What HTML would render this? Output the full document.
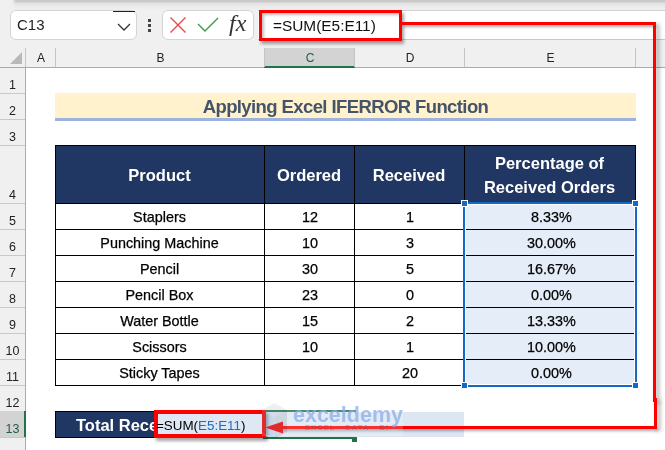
<!DOCTYPE html>
<html><head><meta charset="utf-8"><style>
html,body{margin:0;padding:0;}
body{width:665px;height:450px;overflow:hidden;position:relative;background:#ffffff;font-family:"Liberation Sans",sans-serif;}
div{position:absolute;box-sizing:border-box;}
.t{white-space:nowrap;text-align:center;}
</style></head><body>

<div style="left:0px;top:0px;width:665px;height:48px;background:#f0f0f0"></div>
<div style="left:12px;top:0px;width:653px;height:10px;background:linear-gradient(#c8c8c8 0px,#cacaca 1.5px,#e2e2e2 3.5px,#eaeaea 6px,#f0f0f0 10px);-webkit-mask-image:linear-gradient(90deg,transparent 0px,#000 4px)"></div>
<div style="left:10px;top:10px;width:127px;height:30px;background:#fff;border:1px solid #d4d4d4;border-radius:6px"></div>
<div style="left:113px;top:11px;width:22px;height:1px;background:#222"></div>
<div class="t" style="left:17px;top:11px;width:40px;height:28px;line-height:28px;text-align:left;font-size:15px;color:#222">C13</div>
<svg style="position:absolute;left:116px;top:22px" width="16" height="10"><polyline points="2,2 8,8 14,2" fill="none" stroke="#333" stroke-width="1.3"/></svg>
<div style="left:148px;top:19px;width:3px;height:3px;background:#444"></div>
<div style="left:148px;top:24px;width:3px;height:3px;background:#444"></div>
<div style="left:148px;top:29px;width:3px;height:3px;background:#444"></div>
<div style="left:162px;top:10px;width:92px;height:30px;background:#fff;border:1px solid #d4d4d4;border-radius:6px"></div>
<svg style="position:absolute;left:168px;top:15px" width="20" height="20"><path d="M2.5,2.5 L17.5,17.5 M17.5,2.5 L2.5,17.5" stroke="#e8474a" stroke-width="1.4" fill="none"/></svg>
<svg style="position:absolute;left:196px;top:15px" width="24" height="20"><polyline points="2,9 9,16 22,3" stroke="#3a9a48" stroke-width="1.4" fill="none"/></svg>
<div class="t" style="left:229px;top:10px;width:26px;height:26px;line-height:26px;font-family:'Liberation Serif',serif;font-style:italic;font-size:24px;color:#333;text-align:left;letter-spacing:0px">fx</div>
<div style="left:258px;top:10px;width:407px;height:30px;background:#fff;border-top:1px solid #d0d0d0;border-bottom:1px solid #c8c8c8"></div>
<div style="left:0px;top:48px;width:665px;height:20px;background:#f0f0f0;border-bottom:1px solid #ababab"></div>
<div style="left:264px;top:48px;width:91px;height:20px;background:#d3d3d3;border-bottom:2px solid #217346"></div>
<div style="left:25px;top:48px;width:1px;height:19px;background:#c4c4c4"></div>
<div style="left:55px;top:48px;width:1px;height:19px;background:#c4c4c4"></div>
<div style="left:264px;top:48px;width:1px;height:19px;background:#c4c4c4"></div>
<div style="left:354px;top:48px;width:1px;height:19px;background:#c4c4c4"></div>
<div style="left:464px;top:48px;width:1px;height:19px;background:#c4c4c4"></div>
<div style="left:635px;top:48px;width:1px;height:19px;background:#c4c4c4"></div>
<svg style="position:absolute;left:8px;top:50px" width="16" height="16"><polygon points="14,2 14,14 2,14" fill="#b9b9b9"/></svg>
<div class="t" style="left:26px;top:49px;width:30px;height:19px;line-height:19px;font-size:12px;color:#222">A</div>
<div class="t" style="left:56px;top:49px;width:209px;height:19px;line-height:19px;font-size:12px;color:#222">B</div>
<div class="t" style="left:265px;top:49px;width:90px;height:19px;line-height:19px;font-size:12px;color:#1f5f3f">C</div>
<div class="t" style="left:355px;top:49px;width:110px;height:19px;line-height:19px;font-size:12px;color:#222">D</div>
<div class="t" style="left:465px;top:49px;width:171px;height:19px;line-height:19px;font-size:12px;color:#222">E</div>
<div style="left:0px;top:68px;width:26px;height:382px;background:#f0f0f0;border-right:1px solid #ababab"></div>
<div style="left:0px;top:93px;width:25px;height:1px;background:#c8c8c8"></div>
<div class="t" style="left:0px;top:76px;width:25px;height:18px;line-height:18px;font-size:12.5px;color:#222">1</div>
<div style="left:0px;top:119px;width:25px;height:1px;background:#c8c8c8"></div>
<div class="t" style="left:0px;top:102px;width:25px;height:18px;line-height:18px;font-size:12.5px;color:#222">2</div>
<div style="left:0px;top:145px;width:25px;height:1px;background:#c8c8c8"></div>
<div class="t" style="left:0px;top:128px;width:25px;height:18px;line-height:18px;font-size:12.5px;color:#222">3</div>
<div style="left:0px;top:203px;width:25px;height:1px;background:#c8c8c8"></div>
<div class="t" style="left:0px;top:186px;width:25px;height:18px;line-height:18px;font-size:12.5px;color:#222">4</div>
<div style="left:0px;top:229px;width:25px;height:1px;background:#c8c8c8"></div>
<div class="t" style="left:0px;top:212px;width:25px;height:18px;line-height:18px;font-size:12.5px;color:#222">5</div>
<div style="left:0px;top:255px;width:25px;height:1px;background:#c8c8c8"></div>
<div class="t" style="left:0px;top:238px;width:25px;height:18px;line-height:18px;font-size:12.5px;color:#222">6</div>
<div style="left:0px;top:281px;width:25px;height:1px;background:#c8c8c8"></div>
<div class="t" style="left:0px;top:264px;width:25px;height:18px;line-height:18px;font-size:12.5px;color:#222">7</div>
<div style="left:0px;top:307px;width:25px;height:1px;background:#c8c8c8"></div>
<div class="t" style="left:0px;top:290px;width:25px;height:18px;line-height:18px;font-size:12.5px;color:#222">8</div>
<div style="left:0px;top:333px;width:25px;height:1px;background:#c8c8c8"></div>
<div class="t" style="left:0px;top:316px;width:25px;height:18px;line-height:18px;font-size:12.5px;color:#222">9</div>
<div style="left:0px;top:359px;width:25px;height:1px;background:#c8c8c8"></div>
<div class="t" style="left:0px;top:342px;width:25px;height:18px;line-height:18px;font-size:12.5px;color:#222">10</div>
<div style="left:0px;top:385px;width:25px;height:1px;background:#c8c8c8"></div>
<div class="t" style="left:0px;top:368px;width:25px;height:18px;line-height:18px;font-size:12.5px;color:#222">11</div>
<div style="left:0px;top:411px;width:25px;height:1px;background:#c8c8c8"></div>
<div class="t" style="left:0px;top:394px;width:25px;height:18px;line-height:18px;font-size:12.5px;color:#222">12</div>
<div style="left:0px;top:411px;width:26px;height:26px;background:#d3d3d3"></div>
<div style="left:24px;top:411px;width:2px;height:26px;background:#217346"></div>
<div style="left:0px;top:437px;width:25px;height:1px;background:#c8c8c8"></div>
<div class="t" style="left:0px;top:420px;width:25px;height:18px;line-height:18px;font-size:12.5px;color:#1f5f3f">13</div>
<div style="left:0px;top:463px;width:25px;height:1px;background:#c8c8c8"></div>
<div style="left:55px;top:93px;width:581px;height:25px;background:#fff2cc"></div>
<div style="left:55px;top:118px;width:581px;height:3px;background:#9db3de"></div>
<div class="t" style="left:55px;top:94px;width:581px;height:26px;line-height:26px;font-size:18.5px;letter-spacing:-0.6px;font-weight:bold;color:#44546a">Applying Excel IFERROR Function</div>
<div style="left:55px;top:145px;width:581px;height:59px;background:#203764;border:1px solid #000"></div>
<div style="left:264px;top:145px;width:1px;height:241px;background:#000"></div>
<div style="left:354px;top:145px;width:1px;height:241px;background:#000"></div>
<div style="left:464px;top:145px;width:1px;height:241px;background:#000"></div>
<div class="t" style="left:55px;top:146px;width:209px;height:58px;line-height:58px;font-size:16.5px;font-weight:bold;color:#fff">Product</div>
<div class="t" style="left:264px;top:146px;width:90px;height:58px;line-height:58px;font-size:16.5px;font-weight:bold;color:#fff">Ordered</div>
<div class="t" style="left:354px;top:146px;width:110px;height:58px;line-height:58px;font-size:16.5px;font-weight:bold;color:#fff">Received</div>
<div class="t" style="left:464px;top:151px;width:171px;height:24px;line-height:24px;font-size:16.5px;font-weight:bold;color:#fff">Percentage of</div>
<div class="t" style="left:464px;top:175px;width:171px;height:24px;line-height:24px;font-size:16.5px;font-weight:bold;color:#fff">Received Orders</div>
<div style="left:465px;top:204px;width:170px;height:181px;background:#e5eef8"></div>
<div style="left:55px;top:203px;width:1px;height:183px;background:#000"></div>
<div style="left:635px;top:145px;width:1px;height:241px;background:#000"></div>
<div style="left:55px;top:229px;width:581px;height:1px;background:#000"></div>
<div class="t" style="left:55px;top:205px;width:209px;height:25px;line-height:25px;font-size:14.4px;color:#000;-webkit-text-stroke:0.25px #000">Staplers</div>
<div class="t" style="left:265px;top:205px;width:90px;height:25px;line-height:25px;font-size:14.4px;color:#000;-webkit-text-stroke:0.25px #000">12</div>
<div class="t" style="left:355px;top:205px;width:110px;height:25px;line-height:25px;font-size:14.4px;color:#000;-webkit-text-stroke:0.25px #000">1</div>
<div class="t" style="left:466px;top:205px;width:171px;height:25px;line-height:25px;font-size:14.4px;color:#000;-webkit-text-stroke:0.25px #000">8.33%</div>
<div style="left:55px;top:255px;width:581px;height:1px;background:#000"></div>
<div class="t" style="left:55px;top:231px;width:209px;height:25px;line-height:25px;font-size:14.4px;color:#000;-webkit-text-stroke:0.25px #000">Punching Machine</div>
<div class="t" style="left:265px;top:231px;width:90px;height:25px;line-height:25px;font-size:14.4px;color:#000;-webkit-text-stroke:0.25px #000">10</div>
<div class="t" style="left:355px;top:231px;width:110px;height:25px;line-height:25px;font-size:14.4px;color:#000;-webkit-text-stroke:0.25px #000">3</div>
<div class="t" style="left:466px;top:231px;width:171px;height:25px;line-height:25px;font-size:14.4px;color:#000;-webkit-text-stroke:0.25px #000">30.00%</div>
<div style="left:55px;top:281px;width:581px;height:1px;background:#000"></div>
<div class="t" style="left:55px;top:257px;width:209px;height:25px;line-height:25px;font-size:14.4px;color:#000;-webkit-text-stroke:0.25px #000">Pencil</div>
<div class="t" style="left:265px;top:257px;width:90px;height:25px;line-height:25px;font-size:14.4px;color:#000;-webkit-text-stroke:0.25px #000">30</div>
<div class="t" style="left:355px;top:257px;width:110px;height:25px;line-height:25px;font-size:14.4px;color:#000;-webkit-text-stroke:0.25px #000">5</div>
<div class="t" style="left:466px;top:257px;width:171px;height:25px;line-height:25px;font-size:14.4px;color:#000;-webkit-text-stroke:0.25px #000">16.67%</div>
<div style="left:55px;top:307px;width:581px;height:1px;background:#000"></div>
<div class="t" style="left:55px;top:283px;width:209px;height:25px;line-height:25px;font-size:14.4px;color:#000;-webkit-text-stroke:0.25px #000">Pencil Box</div>
<div class="t" style="left:265px;top:283px;width:90px;height:25px;line-height:25px;font-size:14.4px;color:#000;-webkit-text-stroke:0.25px #000">23</div>
<div class="t" style="left:355px;top:283px;width:110px;height:25px;line-height:25px;font-size:14.4px;color:#000;-webkit-text-stroke:0.25px #000">0</div>
<div class="t" style="left:466px;top:283px;width:171px;height:25px;line-height:25px;font-size:14.4px;color:#000;-webkit-text-stroke:0.25px #000">0.00%</div>
<div style="left:55px;top:333px;width:581px;height:1px;background:#000"></div>
<div class="t" style="left:55px;top:309px;width:209px;height:25px;line-height:25px;font-size:14.4px;color:#000;-webkit-text-stroke:0.25px #000">Water Bottle</div>
<div class="t" style="left:265px;top:309px;width:90px;height:25px;line-height:25px;font-size:14.4px;color:#000;-webkit-text-stroke:0.25px #000">15</div>
<div class="t" style="left:355px;top:309px;width:110px;height:25px;line-height:25px;font-size:14.4px;color:#000;-webkit-text-stroke:0.25px #000">2</div>
<div class="t" style="left:466px;top:309px;width:171px;height:25px;line-height:25px;font-size:14.4px;color:#000;-webkit-text-stroke:0.25px #000">13.33%</div>
<div style="left:55px;top:359px;width:581px;height:1px;background:#000"></div>
<div class="t" style="left:55px;top:335px;width:209px;height:25px;line-height:25px;font-size:14.4px;color:#000;-webkit-text-stroke:0.25px #000">Scissors</div>
<div class="t" style="left:265px;top:335px;width:90px;height:25px;line-height:25px;font-size:14.4px;color:#000;-webkit-text-stroke:0.25px #000">10</div>
<div class="t" style="left:355px;top:335px;width:110px;height:25px;line-height:25px;font-size:14.4px;color:#000;-webkit-text-stroke:0.25px #000">1</div>
<div class="t" style="left:466px;top:335px;width:171px;height:25px;line-height:25px;font-size:14.4px;color:#000;-webkit-text-stroke:0.25px #000">10.00%</div>
<div style="left:55px;top:385px;width:581px;height:1px;background:#000"></div>
<div class="t" style="left:55px;top:361px;width:209px;height:25px;line-height:25px;font-size:14.4px;color:#000;-webkit-text-stroke:0.25px #000">Sticky Tapes</div>
<div class="t" style="left:265px;top:361px;width:90px;height:25px;line-height:25px;font-size:14.4px;color:#000;-webkit-text-stroke:0.25px #000"></div>
<div class="t" style="left:355px;top:361px;width:110px;height:25px;line-height:25px;font-size:14.4px;color:#000;-webkit-text-stroke:0.25px #000">20</div>
<div class="t" style="left:466px;top:361px;width:171px;height:25px;line-height:25px;font-size:14.4px;color:#000;-webkit-text-stroke:0.25px #000">0.00%</div>
<div style="left:465px;top:204px;width:170px;height:181px;border:1px solid #ffffff"></div>
<div style="left:463px;top:202px;width:174px;height:185px;border:2px solid #1469c4"></div>
<div style="left:461px;top:200px;width:7px;height:7px;background:#1469c4;border:1px solid #fff"></div>
<div style="left:632px;top:200px;width:7px;height:7px;background:#1469c4;border:1px solid #fff"></div>
<div style="left:461px;top:382px;width:7px;height:7px;background:#1469c4;border:1px solid #fff"></div>
<div style="left:632px;top:382px;width:7px;height:7px;background:#1469c4;border:1px solid #fff"></div>
<div style="left:55px;top:411px;width:112px;height:27px;background:#203764;border:1px solid #000"></div>
<div class="t" style="left:76px;top:412px;width:90px;height:26px;line-height:26px;text-align:left;font-size:16.5px;font-weight:bold;color:#fff">Total Received</div>
<div style="left:266px;top:412px;width:198px;height:25px;background:#dde7f3"></div>
<div style="left:263px;top:410px;width:93px;height:2px;background:#217346"></div>
<div style="left:263px;top:437px;width:89px;height:2px;background:#217346"></div>
<div style="left:352px;top:437px;width:5px;height:5px;background:#217346"></div>
<div style="left:154px;top:410px;width:112px;height:28px;background:#dde8f4;border:4px solid #ff0000;box-shadow:2px 3px 3px rgba(0,0,0,0.35)"></div>
<div class="t" style="left:156px;top:416px;width:110px;height:20px;line-height:20px;text-align:left;font-size:13.4px;color:#000">=SUM(<span style="color:#1f6bc2">E5:E11</span>)</div>
<div style="left:259px;top:10px;width:143px;height:31px;border:3px solid #ff0000;box-shadow:2px 3px 3px rgba(0,0,0,0.35), inset 2px 2px 3px rgba(0,0,0,0.25)"></div>
<div class="t" style="left:273px;top:13px;width:120px;height:26px;line-height:26px;text-align:left;font-size:15.4px;color:#111">=SUM(E5:E11)</div>
<div style="left:402px;top:22px;width:253px;height:3px;background:#ff0000;box-shadow:1px 2px 3px rgba(0,0,0,0.35)"></div>
<div style="left:653px;top:22px;width:3px;height:380px;background:#ff0000;box-shadow:3px 2px 4px rgba(0,0,0,0.35)"></div>
<div style="left:654px;top:398px;width:3px;height:31px;background:#ff0000;box-shadow:3px 2px 4px rgba(0,0,0,0.35)"></div>
<div style="left:280px;top:426px;width:377px;height:3px;background:#ff0000;box-shadow:1px 2px 3px rgba(0,0,0,0.35)"></div>
<svg style="position:absolute;left:264px;top:420px" width="20" height="15"><polygon points="1,7.5 19,1.5 19,13.5" fill="#ff0000"/></svg>
<div style="left:262px;top:403px;width:141px;height:33px;background:rgba(255,255,255,0.18)"></div>
<svg style="position:absolute;left:261px;top:402px;opacity:0.3;mix-blend-mode:multiply" width="28" height="39"><polygon points="13.5,1 26,8 13.5,15 1,8" fill="#c3cad8"/><polygon points="1,8 13.5,15 13.5,37 1,30" fill="#9db4e2"/><polygon points="26,8 13.5,15 13.5,37 26,30" fill="#a8afba"/></svg>
<div class="t" style="left:293px;top:403px;width:112px;height:24px;line-height:24px;text-align:left;font-size:21.5px;font-weight:bold;color:rgba(140,172,232,0.75)">exceldemy</div>
<div class="t" style="left:305px;top:422px;width:110px;height:12px;line-height:12px;text-align:left;font-size:7.5px;font-weight:bold;color:rgba(90,90,90,0.4);letter-spacing:1.1px">EXCEL - DATA - BI</div>
</body></html>
